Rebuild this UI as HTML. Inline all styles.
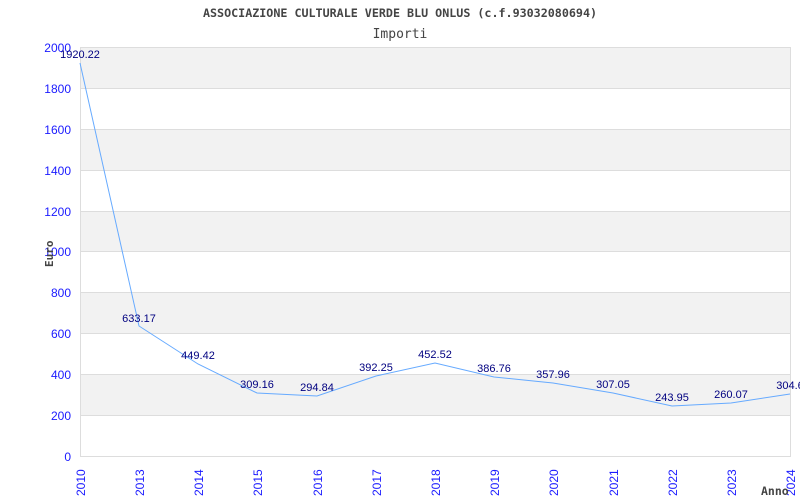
<!DOCTYPE html>
<html><head><meta charset="utf-8"><style>
html,body{margin:0;padding:0;background:#fff;width:800px;height:500px;overflow:hidden}
</style></head><body>
<svg width="800" height="500" xmlns="http://www.w3.org/2000/svg">
<text x="400" y="17" text-anchor="middle" font-family="DejaVu Sans Mono, Liberation Mono, monospace" font-weight="bold" font-size="11.7" fill="#444">ASSOCIAZIONE CULTURALE VERDE BLU ONLUS (c.f.93032080694)</text>
<text x="400" y="38" text-anchor="middle" font-family="DejaVu Sans Mono, Liberation Mono, monospace" font-size="13" fill="#444">Importi</text>
<g fill="#f2f2f2">
<rect x="80" y="47" width="710" height="41"/>
<rect x="80" y="129" width="710" height="41"/>
<rect x="80" y="211" width="710" height="40"/>
<rect x="80" y="292" width="710" height="41"/>
<rect x="80" y="374" width="710" height="41"/>
</g>
<g stroke="#ddd" stroke-width="1">
<line x1="80" y1="47.5" x2="790" y2="47.5"/><line x1="80" y1="88.5" x2="790" y2="88.5"/>
<line x1="80" y1="129.5" x2="790" y2="129.5"/><line x1="80" y1="170.5" x2="790" y2="170.5"/>
<line x1="80" y1="211.5" x2="790" y2="211.5"/><line x1="80" y1="251.5" x2="790" y2="251.5"/>
<line x1="80" y1="292.5" x2="790" y2="292.5"/><line x1="80" y1="333.5" x2="790" y2="333.5"/>
<line x1="80" y1="374.5" x2="790" y2="374.5"/><line x1="80" y1="415.5" x2="790" y2="415.5"/>
<line x1="80" y1="456.5" x2="790" y2="456.5"/>
<line x1="80.5" y1="47" x2="80.5" y2="457"/><line x1="790.5" y1="47" x2="790.5" y2="457"/>
</g>
<g font-family="Liberation Sans, sans-serif" font-size="12" fill="#1a1aff" text-anchor="end">
<text x="71" y="52">2000</text><text x="71" y="93">1800</text><text x="71" y="134">1600</text>
<text x="71" y="175">1400</text><text x="71" y="216">1200</text><text x="71" y="256">1000</text>
<text x="71" y="297">800</text><text x="71" y="338">600</text><text x="71" y="379">400</text>
<text x="71" y="420">200</text><text x="71" y="461">0</text>
</g>
<g font-family="Liberation Sans, sans-serif" font-size="12" fill="#1a1aff">
<text transform="translate(85,496) rotate(-90)">2010</text>
<text transform="translate(144,496) rotate(-90)">2013</text>
<text transform="translate(203,496) rotate(-90)">2014</text>
<text transform="translate(262,496) rotate(-90)">2015</text>
<text transform="translate(322,496) rotate(-90)">2016</text>
<text transform="translate(381,496) rotate(-90)">2017</text>
<text transform="translate(440,496) rotate(-90)">2018</text>
<text transform="translate(499,496) rotate(-90)">2019</text>
<text transform="translate(558,496) rotate(-90)">2020</text>
<text transform="translate(618,496) rotate(-90)">2021</text>
<text transform="translate(677,496) rotate(-90)">2022</text>
<text transform="translate(736,496) rotate(-90)">2023</text>
<text transform="translate(795,496) rotate(-90)">2024</text>
</g>
<text transform="translate(53,267) rotate(-90)" font-family="DejaVu Sans Mono, monospace" font-weight="bold" font-size="11" fill="#444">Euro</text>
<text x="761" y="495" font-family="DejaVu Sans Mono, monospace" font-weight="bold" font-size="11.5" fill="#444">Anno</text>
<polyline fill="none" stroke="#66aaff" stroke-width="1" points="80,63 139,326 198,364 257,393 317,396 376,376 435,363 494,377 553,383 613,393 672,406 731,403 790,394"/>
<g font-family="Liberation Sans, sans-serif" font-size="11" fill="#000080" text-anchor="middle">
<text x="80" y="58">1920.22</text>
<text x="139" y="322">633.17</text>
<text x="198" y="359">449.42</text>
<text x="257" y="388">309.16</text>
<text x="317" y="391">294.84</text>
<text x="376" y="371">392.25</text>
<text x="435" y="358">452.52</text>
<text x="494" y="372">386.76</text>
<text x="553" y="378">357.96</text>
<text x="613" y="388">307.05</text>
<text x="672" y="401">243.95</text>
<text x="731" y="398">260.07</text>
<text x="790" y="389">304.6</text>
</g>
</svg>
</body></html>
